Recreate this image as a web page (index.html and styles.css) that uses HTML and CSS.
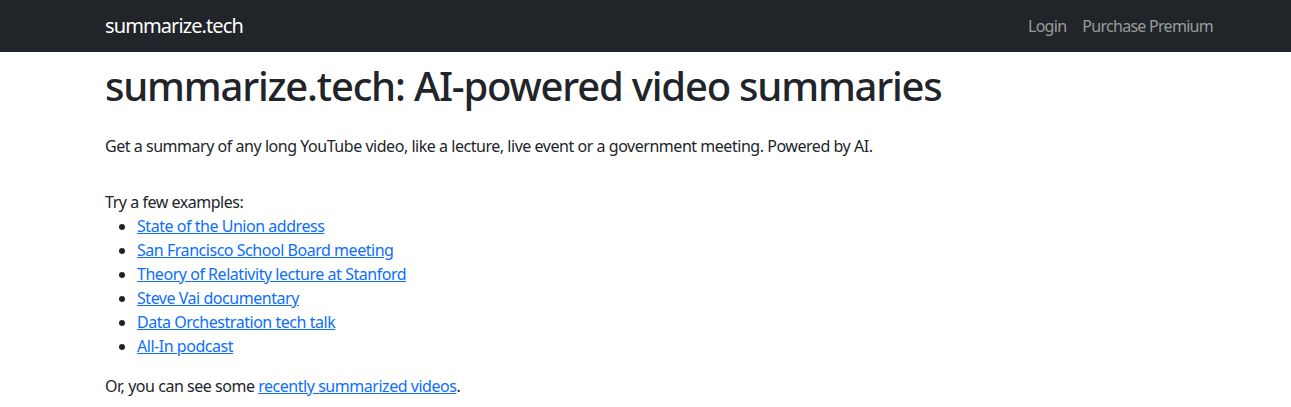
FILE: index.html
```html
<!DOCTYPE html>
<html lang="en">
<head>
    <meta charset="UTF-8">
    <meta name="viewport" content="width=device-width, initial-scale=1.0">
    <link rel="stylesheet" href="styles.css">
    <title>summarize.tech: AI-powered video summaries</title>
</head>
<body>

    <nav class="navbar">
        <div class="container nav-inner">
            <a class="brand" href="#">summarize.tech</a>
            <div class="nav-links">
                <a class="nav-link" href="#">Login</a>
                <a class="nav-link" href="#">Purchase Premium</a>
            </div>
        </div>
    </nav>

    <main class="container">
        <h1 class="title">summarize.tech: AI-powered video summaries</h1>
        <p class="intro">Get a summary of any long YouTube video, like a lecture, live event or a government meeting. Powered by AI.</p>

        <div class="examples">
            Try a few examples:
            <ul class="example-list">
                <li><a href="#">State of the Union address</a></li>
                <li><a href="#">San Francisco School Board meeting</a></li>
                <li><a href="#">Theory of Relativity lecture at Stanford</a></li>
                <li><a href="#">Steve Vai documentary</a></li>
                <li><a href="#">Data Orchestration tech talk</a></li>
                <li><a href="#">All-In podcast</a></li>
            </ul>
        </div>

        <p class="recent">Or, you can see some <a href="#">recently summarized videos</a>.</p>
    </main>

</body>
</html>
```

FILE: styles.css
```css
body {
    margin: 0;
    font-family: "Noto Sans", "Open Sans", sans-serif;
    font-size: 16px;
    line-height: 1.5;
    letter-spacing: -0.029em;
    color: #212529;
    background-color: #fff;
}

a {
    color: #0d6efd;
}

.container {
    width: 1116px;
    margin-left: 93px;
    padding: 0 12px;
}

.navbar {
    background-color: #212529;
    height: 52px;
    display: flex;
    align-items: center;
}

.nav-inner {
    display: flex;
    justify-content: space-between;
    align-items: center;
}

.brand {
    color: #fff;
    font-size: 20px;
    letter-spacing: -0.045em;
    text-decoration: none;
}

.nav-links {
    display: flex;
}

.nav-link {
    color: rgba(255, 255, 255, 0.55);
    text-decoration: none;
    letter-spacing: -0.045em;
    padding: 0 8px;
}

.title {
    font-size: 40px;
    font-weight: 500;
    line-height: 1.2;
    letter-spacing: -0.03em;
    margin: 10px 0 24px;
}

.intro {
    margin: 0 0 32px;
}

.examples {
    margin-bottom: 16px;
}

.example-list {
    margin: 0;
    padding-left: 32px;
}

.recent {
    margin: 0;
}
```
